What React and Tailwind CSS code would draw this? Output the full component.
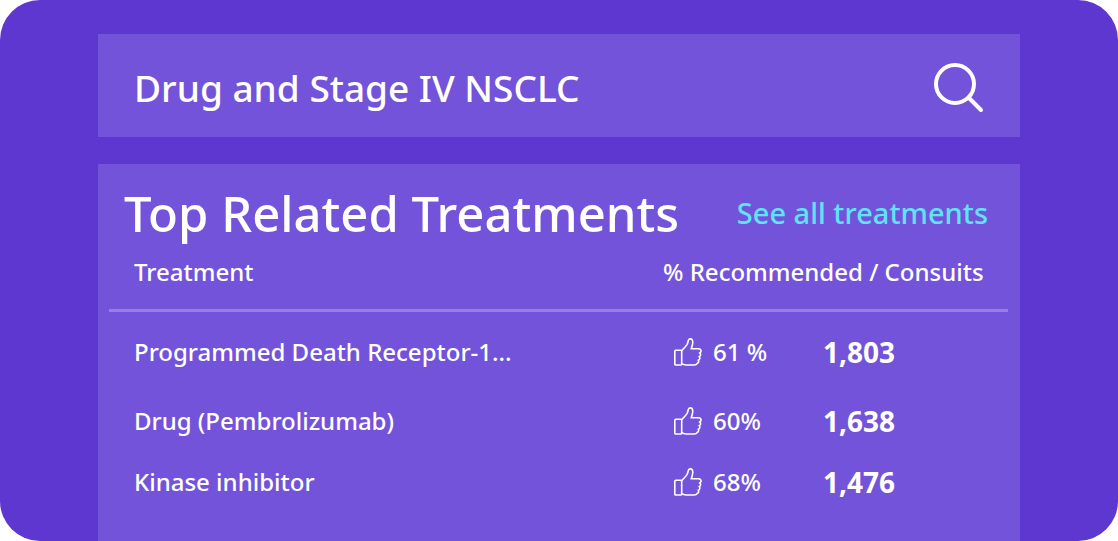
import React, { useState } from 'react';

const treatments = [
  { name: 'Programmed Death Receptor-1...', recommended: '61 %', consults: '1,803', height: 'h-[82px]' },
  { name: 'Drug (Pembrolizumab)', recommended: '60%', consults: '1,638', height: 'h-[58px]' },
  { name: 'Kinase inhibitor', recommended: '68%', consults: '1,476', height: 'h-[64px]' },
];

const SearchIcon = () => (
  <svg className="w-[50px] h-[50px]" viewBox="0 0 50 50" fill="none" stroke="currentColor" strokeWidth="4" strokeLinecap="round" aria-hidden="true">
    <circle cx="21" cy="21" r="19" />
    <path d="M35.5 35.5 47 47" />
  </svg>
);

const ThumbIcon = () => (
  <svg className="w-7 h-7 shrink-0" viewBox="0 0 28 28" fill="none" stroke="currentColor" strokeWidth="1.6" strokeLinecap="round" strokeLinejoin="round" aria-hidden="true">
    <path d="M1.8 12.2H6.6Q7.7 12.2 7.7 13.3V25.9Q7.7 27 6.6 27H1.8Q.8 27 .8 25.9V13.3Q.8 12.2 1.8 12.2Z" />
    <path d="M7.7 12.6C9.4 11 11.6 8.6 13 6.6 14 5 13.9 3.4 14.5 2 15.1.5 17.4.6 18.2 1.8 19.8 4.4 18.3 7.5 17.2 10.8H24.2C26.8 10.8 27.6 12.6 26.7 14 26.4 14.5 26 14.8 25.5 15 27 15.7 27.2 17.8 25.1 18.7 26.3 19.5 26 21.7 24.2 22.3 25 23.2 24.6 24.8 23.3 25.3 22.7 26.5 21.5 27 20.1 27H12C10.2 27 9 26.7 7.7 25.7" />
  </svg>
);

const App = () => {
  const [query, setQuery] = useState('Drug and Stage IV NSCLC');

  return (
    <main className="min-h-screen flex flex-col px-[98px] pt-[34px] rounded-[40px] overflow-hidden bg-[#5e37d1] text-white font-medium font-['Noto_Sans',sans-serif]">
      {/* Search Bar */}
      <form onSubmit={(e) => e.preventDefault()} className="flex items-center h-[103px] px-9 pt-1 bg-[#7353d9]">
        <input
          type="text"
          aria-label="Search treatments"
          value={query}
          onChange={(e) => setQuery(e.target.value)}
          className="flex-1 min-w-0 bg-transparent text-[37px] leading-[48px] outline-none"
        />
        <button type="submit" aria-label="Search">
          <SearchIcon />
        </button>
      </form>

      {/* Treatments Panel */}
      <section className="flex-1 mt-[27px] pl-[11px] pr-3 pt-3.5 bg-[#7353d9]">
        <div className="flex items-center justify-between pl-[15px] pr-5">
          <h1 className="text-[49px] leading-[70px] whitespace-nowrap">Top Related Treatments</h1>
          <a href="#treatments" className="text-[29px] leading-[70px] whitespace-nowrap text-[#5fe3f8]">See all treatments</a>
        </div>

        <table id="treatments" className="w-full table-fixed text-left text-[24px] leading-8">
          <colgroup>
            <col />
            <col className="w-[160px]" />
            <col className="w-[185px]" />
          </colgroup>
          <thead>
            <tr className="h-[62px] align-top border-b-[3px] border-[#987fe5]">
              <th scope="col" className="pl-[25px] pt-2 font-medium">Treatment</th>
              <th scope="col" colSpan={2} className="pt-2 font-medium whitespace-nowrap">% Recommended / Consuits</th>
            </tr>
          </thead>
          <tbody>
            {treatments.map((item) => (
              <tr key={item.name} className={item.height}>
                <td className="pl-[25px] whitespace-nowrap">{item.name}</td>
                <td className="pl-[11px]">
                  <span className="flex items-center gap-[11px] whitespace-nowrap">
                    <ThumbIcon />
                    {item.recommended}
                  </span>
                </td>
                <td className="text-[28px] font-bold">{item.consults}</td>
              </tr>
            ))}
          </tbody>
        </table>
      </section>
    </main>
  );
};

export default App;
